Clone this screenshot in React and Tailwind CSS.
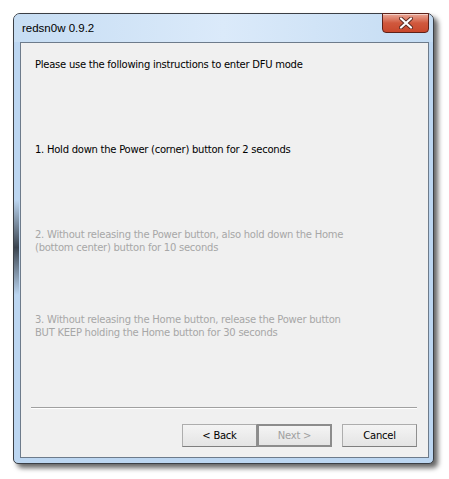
import React from 'react';

const font = { fontFamily: '"DejaVu Sans", Verdana, sans-serif' };

const steps = [
  { lines: ['Please use the following instructions to enter DFU mode'], dim: false },
  { lines: ['1. Hold down the Power (corner) button for 2 seconds'], dim: false },
  {
    lines: [
      '2. Without releasing the Power button, also hold down the Home',
      '(bottom center) button for 10 seconds',
    ],
    dim: true,
  },
  {
    lines: [
      '3. Without releasing the Home button, release the Power button',
      'BUT KEEP holding the Home button for 30 seconds',
    ],
    dim: true,
  },
];

const CloseButton = () => (
  <div className="absolute top-[-1px] right-[4px] w-[47px] h-[20px] rounded-b-[4px] border border-[#5e2119] bg-gradient-to-b from-[#e9a797] via-[#d0583d] to-[#c8472c] flex items-center justify-center shadow-[inset_0_1px_0_rgba(255,255,255,0.5)]">
    <svg width="14" height="12" viewBox="0 0 14 12">
      <path d="M2 1.5 L12 10.5 M12 1.5 L2 10.5" stroke="#5a2a22" strokeWidth="4" strokeLinecap="round" />
      <path d="M2 1.5 L12 10.5 M12 1.5 L2 10.5" stroke="#ffffff" strokeWidth="2.2" strokeLinecap="round" />
    </svg>
  </div>
);

const Button = ({ label, disabled, isDefault }) => (
  <div
    className={`w-[75px] h-[23px] flex items-center justify-center text-[10px] tracking-[-0.25px] bg-gradient-to-b from-[#f4f4f4] to-[#e4e4e4] ${
      isDefault
        ? 'border-2 border-[#8c8c8c] text-[#a0a0a0]'
        : 'border border-[#adadad] border-b-[#7f7f7f] border-r-[#8f8f8f] text-black'
    } ${disabled ? 'text-[#a0a0a0]' : ''}`}
  >
    {label}
  </div>
);

export default function App() {
  return (
    <div className="w-[449px] h-[479px] bg-white pt-[13px] pl-[13px]" style={font}>
      <div className="relative w-[421px] h-[451px] rounded-t-[7px] rounded-b-[5px] border border-[#3b3f45] bg-[#bcd6f1] shadow-[4px_4px_5px_rgba(0,0,0,0.6)] flex flex-col">
        {/* glass streak on the left frame */}
        <div className="absolute left-0 top-[186px] w-[5px] h-[95px] bg-gradient-to-b from-transparent via-[#1a1f26] to-transparent opacity-80" />

        {/* title bar */}
        <div className="h-[28px] rounded-t-[6px] bg-gradient-to-r from-[#c6ddf3] via-[#dbeafa] to-[#c4dcf3] flex items-center pl-[8px] pt-[1px]">
          <span className="text-[11.5px] text-black" style={{ fontFamily: '"Liberation Sans", Arial, sans-serif' }}>
            redsn0w 0.9.2
          </span>
        </div>
        <CloseButton />

        {/* client area */}
        <div className="ml-[6px] mr-[4px] w-[409px] h-[416px] border border-[#6d7b8b] bg-[#f0f0f0] flex flex-col">
          <div className="pt-[15px] pl-[14px] flex flex-col">
            {steps.map((s, i) => (
              <div key={i} className={`h-[85px] text-[10px] leading-[13px] tracking-[-0.25px] ${s.dim ? 'text-[#a7a7a7]' : 'text-black'}`}>
                {s.lines.map((l) => (
                  <div key={l}>{l}</div>
                ))}
              </div>
            ))}
          </div>
          <div className="mt-[9px] ml-[10px] mr-[11px] h-[2px] border-t border-[#a0a0a0] border-b border-b-white" />
          <div className="flex justify-end mt-[15px] mr-[11px]">
            <Button label="< Back" />
            <Button label="Next >" isDefault disabled />
            <div className="w-[10px]" />
            <Button label="Cancel" />
          </div>
        </div>
      </div>
    </div>
  );
}
